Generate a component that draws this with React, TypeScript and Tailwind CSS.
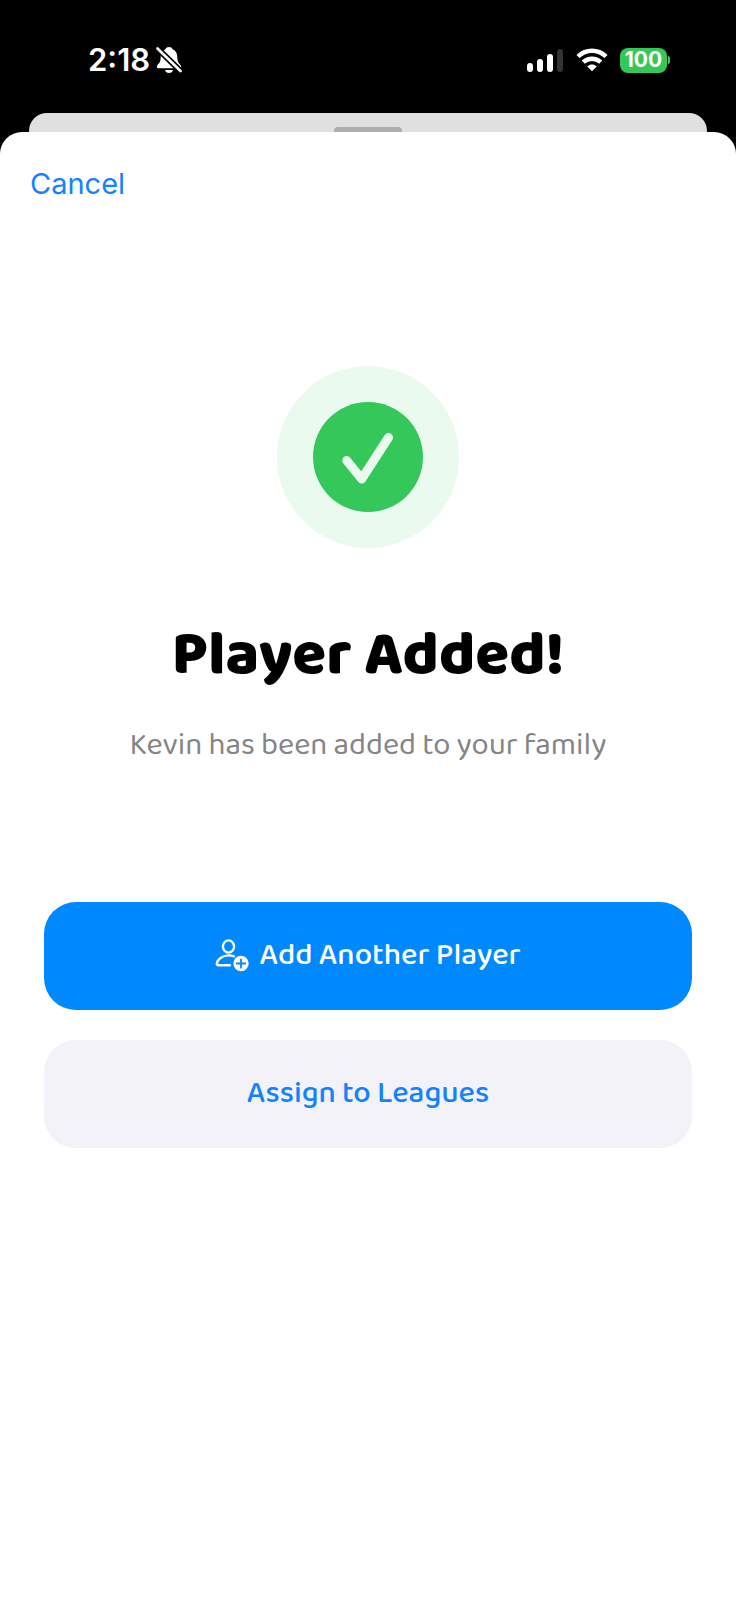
import { clsx } from "clsx";

const signalBars = [
  { height: "h-[9px]", active: true },
  { height: "h-[13px]", active: true },
  { height: "h-[18px]", active: true },
  { height: "h-[23px]", active: false },
];

function MutedBellIcon() {
  return (
    <svg width="26" height="28" viewBox="0 0 26 28" aria-label="Silent mode" role="img">
      <path
        d="M13 1c-1.800 0-3 .9-3.600 2.300C6.300 4.600 4.700 7.500 4.700 11c0 4-.8 5.500-2.600 7.300C1.300 19.200 .8 19.900 .8 20.800c0 .9.5 1.400 1.500 1.400h21.400c1 0 1.500-.5 1.500-1.400 0-.9-.5-1.600-1.300-2.500C22.100 16.500 21.300 15 21.300 11c0-3.500-1.600-6.400-4.700-7.700C16 1.900 14.800 1 13 1Z"
        fill="white"
      />
      <path d="M9 24h8c-.4 1.900-2 3-4 3s-3.600-1.100-4-3Z" fill="white" />
      <path d="M0 1 26 26.500" stroke="black" strokeWidth="6" />
      <path d="M1.500 2.500 24.500 25" stroke="white" strokeWidth="2.600" strokeLinecap="round" />
    </svg>
  );
}

function WifiIcon() {
  return (
    <svg width="32" height="24" viewBox="0 0 32 24" aria-label="Wi-Fi" role="img">
      <g fill="none" stroke="white" strokeWidth="4.400">
        <path d="M2 8.500C10 .8 22 .8 30 8.500" />
        <path d="M7.300 14.200C12.300 9.500 19.700 9.500 24.700 14.200" />
      </g>
      <path d="M11.300 18.400C14 16 18 16 20.700 18.400L16 23.200Z" fill="white" />
    </svg>
  );
}

function StatusBar() {
  return (
    <header className="flex h-[113px] items-start justify-between pt-[42px] pr-[66px] pl-[88px] text-white">
      <div className="flex h-9 items-center gap-1.5">
        <span className="text-[31px] font-semibold">2:18</span>
        <MutedBellIcon />
      </div>

      <div className="flex h-9 items-center">
        <div className="flex items-end gap-1" aria-label="Signal strength" role="img">
          {signalBars.map((bar) => (
            <span
              key={bar.height}
              className={clsx("w-1.5 rounded-sm", bar.height, bar.active ? "bg-white" : "bg-[#333333]")}
            />
          ))}
        </div>
        <div className="ml-[13px]">
          <WifiIcon />
        </div>
        <div className="ml-3 flex items-center gap-px">
          <span className="flex h-[25px] w-[47px] items-center justify-center rounded-lg bg-[#34c759] text-[21px] font-bold">
            100
          </span>
          <span className="h-2 w-0.5 rounded-r-full bg-[#34c759]" />
        </div>
      </div>
    </header>
  );
}

function SuccessBadge() {
  return (
    <div className="flex size-[182px] items-center justify-center rounded-full bg-[#eafaee]">
      <div className="flex size-[110px] items-center justify-center rounded-full bg-[#34c759]">
        <svg width="110" height="110" viewBox="0 0 110 110" aria-hidden="true">
          <path
            d="M33.700 58.500 48.700 77 75.500 35.500"
            fill="none"
            stroke="#eafaee"
            strokeWidth="9"
            strokeLinecap="round"
            strokeLinejoin="round"
          />
        </svg>
      </div>
    </div>
  );
}

function AddPersonIcon() {
  return (
    <svg width="34" height="34" viewBox="0 0 34 34" fill="none" aria-hidden="true">
      <ellipse cx="13.500" cy="7.500" rx="5.600" ry="6.100" stroke="white" strokeWidth="2.400" />
      <path
        d="M19 17.300c-1.500-.6-3.500-.9-5.500-.9-6.200 0-11.200 4.300-11.700 8-.1 1.200.4 1.800 1.600 1.800H15"
        stroke="white"
        strokeWidth="2.400"
        strokeLinecap="round"
      />
      <circle cx="26" cy="24.500" r="7.700" fill="white" />
      <path d="M26 20.300v8.400M21.800 24.500h8.400" stroke="#0088ff" strokeWidth="1.800" strokeLinecap="round" />
    </svg>
  );
}

export default function App() {
  return (
    <div className="flex min-h-screen flex-col bg-black font-['Inter',sans-serif]">
      <StatusBar />

      {/* Edge of the sheet underneath */}
      <div className="mx-[29px] flex h-[19px] items-end justify-center rounded-t-[18px] bg-[#e0e0e0]">
        <div className="h-[5px] w-[68px] rounded-t bg-[#adadad]" />
      </div>

      <main className="flex flex-1 flex-col rounded-t-[22px] bg-white">
        <div className="flex px-[30px] pt-8">
          <button type="button" className="text-[29px] leading-10 text-[#1482ff]">
            Cancel
          </button>
        </div>

        <div className="flex flex-col items-center px-11 pt-[162px] font-['Baloo_2','Noto_Sans',sans-serif]">
          <SuccessBadge />
          <h1 className="mt-[68px] text-[62px] leading-20 font-extrabold text-black">Player Added!</h1>
          <p className="mt-[30px] text-[31px] leading-10 text-[#858587]">Kevin has been added to your family</p>

          <div className="mt-[136px] flex w-full flex-col gap-[30px] text-[31px] font-medium">
            <button
              type="button"
              className="flex h-[108px] items-center justify-center gap-2.5 rounded-[32px] bg-[#0088ff] text-white"
            >
              <AddPersonIcon />
              Add Another Player
            </button>
            <button type="button" className="h-[108px] rounded-[32px] bg-[#f2f2f8] text-[#1482ff]">
              Assign to Leagues
            </button>
          </div>
        </div>
      </main>
    </div>
  );
}
